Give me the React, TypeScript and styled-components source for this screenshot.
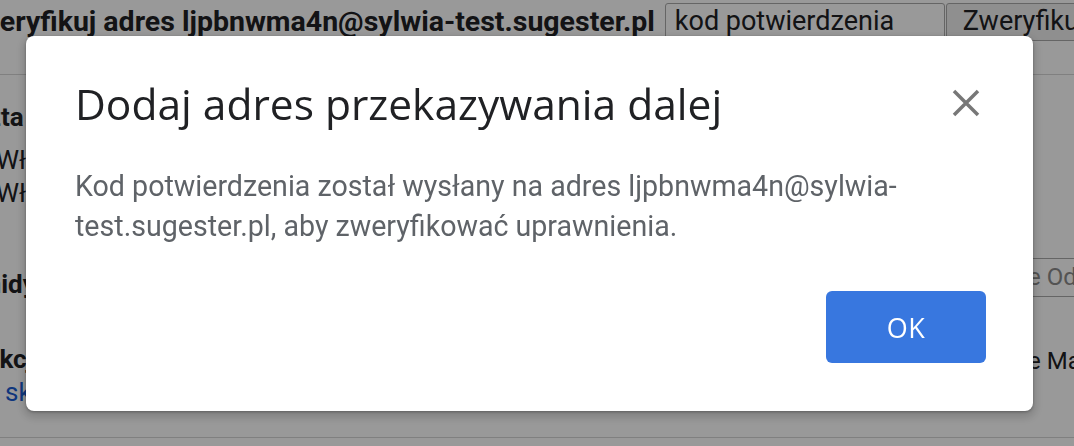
import styled, { createGlobalStyle } from "styled-components";

const Global = createGlobalStyle`
  html, body {
    margin: 0;
    padding: 0;
    background: #ffffff;
    overflow: hidden;
  }
  body {
    font-family: Roboto, "Liberation Sans", Arial, sans-serif;
    color: #202124;
  }
`;

const Page = styled.div`
  width: 1074px;
  height: 446px;
  overflow: hidden;
`;

const TopRow = styled.div`
  display: flex;
  align-items: flex-start;
  height: 75px;
  padding-top: 3px;
  box-sizing: border-box;
  border-bottom: 1px solid #d6d6d6;
  margin-left: -38px;
  white-space: nowrap;
`;

const VerifyText = styled.span`
  font-size: 28.5px;
  font-weight: 700;
  line-height: 37px;
  margin-right: 10px;
`;

const CodeInput = styled.div`
  width: 280px;
  height: 38px;
  box-sizing: border-box;
  border: 1px solid #a8a8a8;
  border-radius: 3px;
  padding-left: 9px;
  font-size: 27px;
  line-height: 35px;
  flex-shrink: 0;
`;

const VerifyButton = styled.div`
  height: 38px;
  box-sizing: border-box;
  border: 1px solid #a8a8a8;
  border-radius: 3px;
  background: #efefef;
  padding: 0 16px;
  margin-left: 1px;
  font-size: 27px;
  line-height: 35px;
  flex-shrink: 0;
`;

const Section = styled.div<{ $height: number; $top: number }>`
  display: grid;
  grid-template-columns: 300px 1fr;
  height: ${(p) => p.$height}px;
  padding-top: ${(p) => p.$top}px;
  box-sizing: border-box;
`;

const Label = styled.div<{ $shift: number; $drop?: number }>`
  font-size: 26px;
  font-weight: 700;
  line-height: 33px;
  margin-left: ${(p) => p.$shift}px;
  margin-top: ${(p) => p.$drop ?? 0}px;
  white-space: nowrap;
`;

const Options = styled.div`
  display: flex;
  flex-direction: column;
  font-size: 26px;
  line-height: 33px;
  margin: 10px 0 0 -4px;
  white-space: nowrap;
`;

const Link = styled.a`
  color: #1a5bd0;
  font-size: 26px;
  line-height: 33px;
  text-decoration: none;
  margin-left: 5px;
`;

const RightCell = styled.div`
  padding-left: 728px;
  white-space: nowrap;
`;

const SideInput = styled.div`
  height: 39px;
  box-sizing: border-box;
  border-top: 1px solid #a8a8a8;
  border-bottom: 1px solid #a8a8a8;
  font-size: 24px;
  line-height: 37px;
  color: #8a8a8a;
`;

const SideText = styled.div`
  font-size: 24px;
  line-height: 33px;
  margin-top: 2px;
`;

const Divider = styled.div`
  border-bottom: 1px solid #d6d6d6;
`;

const Scrim = styled.div`
  position: fixed;
  inset: 0;
  background: rgba(0, 0, 0, 0.4);
  display: flex;
  align-items: flex-start;
  justify-content: flex-start;
  padding: 36px 0 0 26px;
`;

const Dialog = styled.div`
  width: 1007px;
  height: 375px;
  box-sizing: border-box;
  background: #ffffff;
  border-radius: 8px;
  box-shadow: 0 4px 8px 3px rgba(0, 0, 0, 0.15), 0 1px 3px rgba(0, 0, 0, 0.3);
  padding: 0 47px 48px 49px;
  display: flex;
  flex-direction: column;
`;

const Header = styled.div`
  display: flex;
  align-items: center;
  justify-content: space-between;
  height: 124px;
  padding-top: 10px;
  box-sizing: border-box;
`;

const Title = styled.h2`
  margin: 0;
  font-family: "Open Sans", Roboto, sans-serif;
  font-weight: 400;
  font-size: 42.5px;
  color: #202124;
`;

const CloseButton = styled.button`
  border: 0;
  background: none;
  padding: 0;
  width: 40px;
  height: 40px;
  display: flex;
  align-items: center;
  justify-content: center;
  cursor: pointer;
`;

const Body = styled.p`
  margin: 6px 0 0;
  font-size: 28.6px;
  line-height: 40px;
  color: #5f6368;
`;

const Footer = styled.div`
  margin-top: auto;
  display: flex;
  justify-content: flex-end;
`;

const OkButton = styled.button`
  width: 160px;
  height: 72px;
  border: 0;
  border-radius: 6px;
  background: #3877df;
  color: #ffffff;
  font-family: "Open Sans", Roboto, sans-serif;
  font-size: 27px;
  font-weight: 500;
  letter-spacing: 0.5px;
  cursor: pointer;
`;

function CloseIcon() {
  return (
    <svg width="28" height="28" viewBox="0 0 28 28">
      <path d="M2 2 L26 26 M26 2 L2 26" stroke="#777777" strokeWidth="3.5" fill="none" />
    </svg>
  );
}

export default function App() {
  return (
    <>
      <Global />
      <Page>
        <TopRow>
          <VerifyText>Zweryfikuj adres ljpbnwma4n@sylwia-test.sugester.pl</VerifyText>
          <CodeInput>kod potwierdzenia</CodeInput>
          <VerifyButton>Zweryfikuj</VerifyButton>
        </TopRow>
        <Section $height={167} $top={26}>
          <div>
            <Label $shift={-57}>Poczta</Label>
            <Options>
              <span>Włącz przekazywanie</span>
              <span>Włącz kopię</span>
            </Options>
          </div>
          <div />
        </Section>
        <Section $height={75} $top={16}>
          <Label $shift={-68} $drop={10}>
            Piramidy
          </Label>
          <RightCell>
            <SideInput>e Odbiorca</SideInput>
          </RightCell>
        </Section>
        <Section $height={120} $top={26}>
          <div>
            <Label $shift={-18}>Akcje</Label>
            <Link href="#">skróty</Link>
          </div>
          <RightCell>
            <SideText>e Mail</SideText>
          </RightCell>
        </Section>
        <Divider />
      </Page>
      <Scrim>
        <Dialog role="dialog">
          <Header>
            <Title>Dodaj adres przekazywania dalej</Title>
            <CloseButton aria-label="Zamknij">
              <CloseIcon />
            </CloseButton>
          </Header>
          <Body>
            Kod potwierdzenia został wysłany na adres ljpbnwma4n@sylwia-
            <wbr />
            test.sugester.pl, aby zweryfikować uprawnienia.
          </Body>
          <Footer>
            <OkButton>OK</OkButton>
          </Footer>
        </Dialog>
      </Scrim>
    </>
  );
}
